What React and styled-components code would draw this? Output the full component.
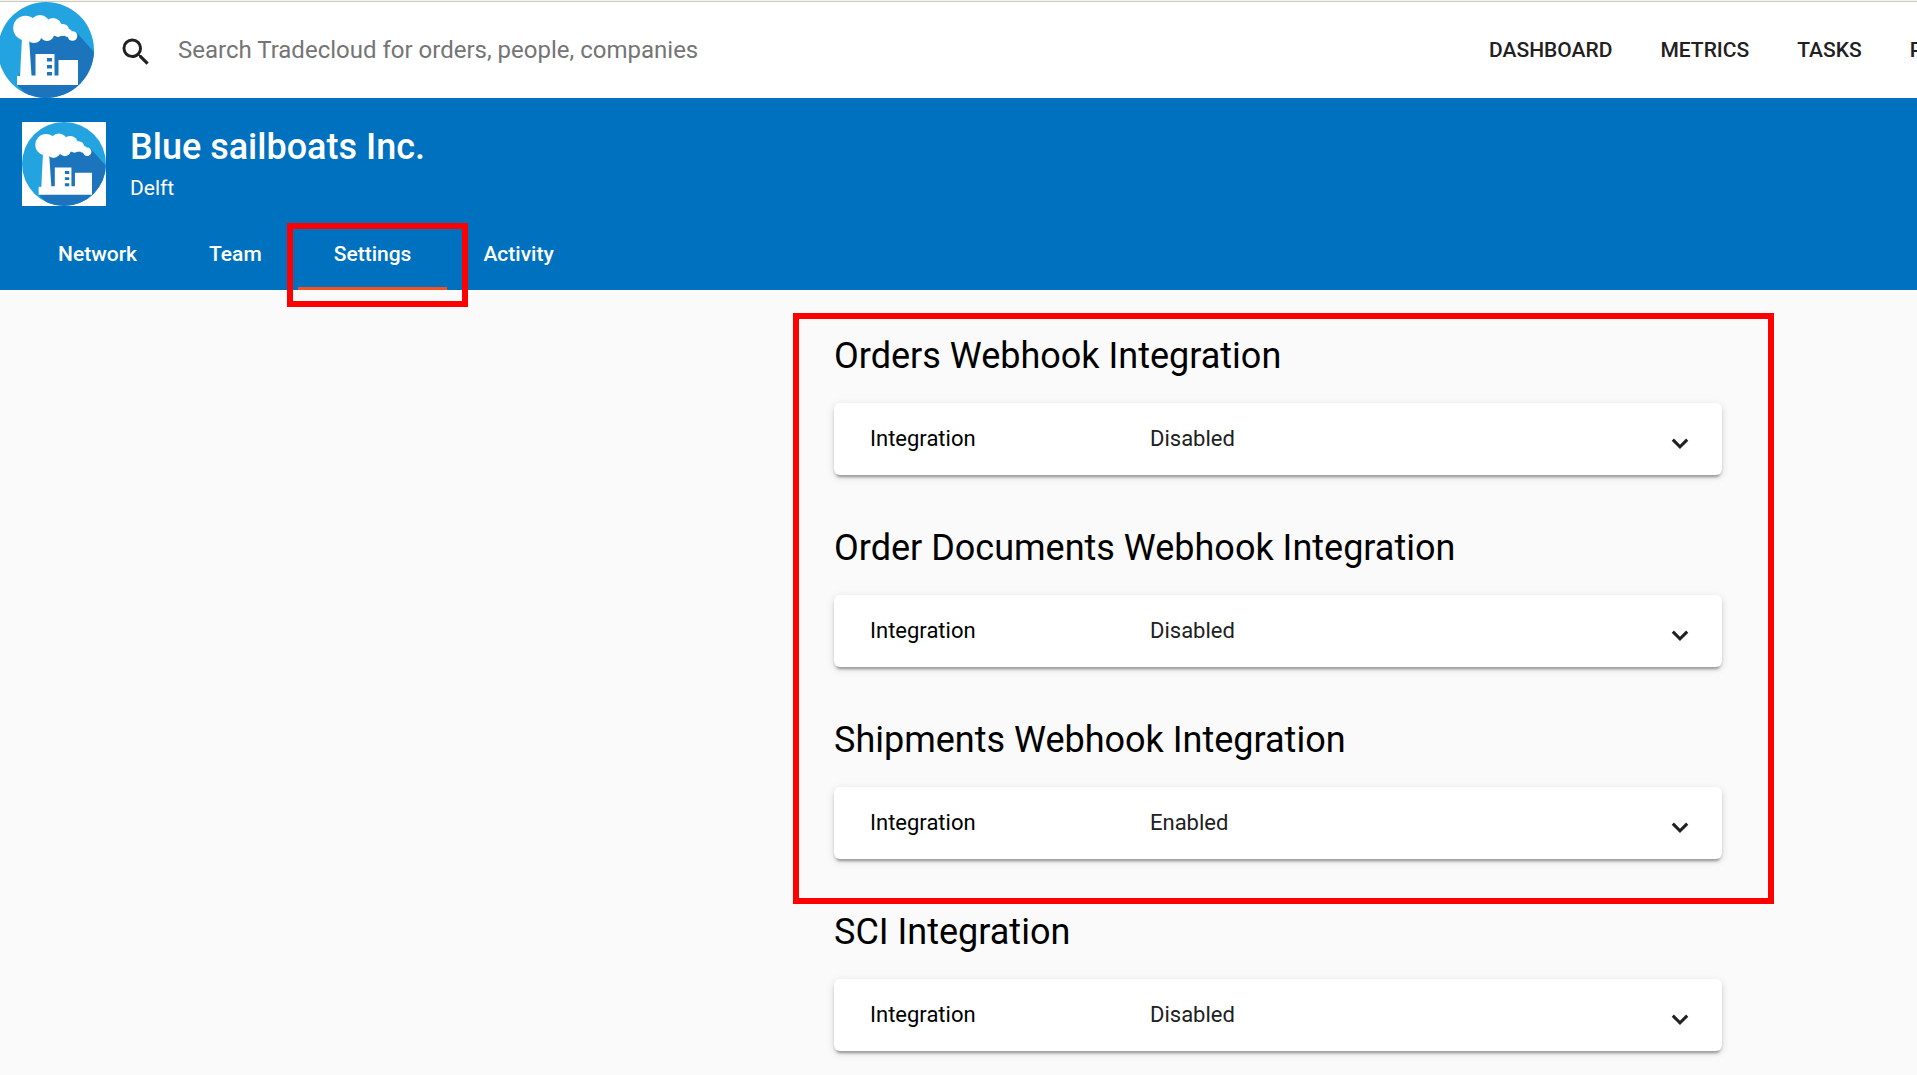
import React from "react";
import styled, { createGlobalStyle } from "styled-components";

const GlobalStyle = createGlobalStyle`
  *, *::before, *::after { box-sizing: border-box; }
  html, body { margin: 0; padding: 0; }
  body {
    background: #fafafa;
    color: rgba(0, 0, 0, 0.87);
    font-family: Roboto, "Liberation Sans", sans-serif;
    overflow-x: hidden;
  }
  button, input { font: inherit; }
`;

const TopBar = styled.header`
  display: flex;
  align-items: center;
  height: 98px;
  padding-top: 1px;
  border-top: 1px solid #f4f4ee;
  background: #fff;
  box-shadow: inset 0 1px #c9cbc0;
  overflow: hidden;
`;

const LogoLink = styled.a`
  display: block;
  flex: none;
  width: 96px;
  height: 96px;
  margin-left: -2px;
`;

const SearchForm = styled.form`
  display: flex;
  align-items: center;
  flex: 1;
  min-width: 0;
  gap: 24px;
  padding-left: 24px;
`;

const SearchButton = styled.button`
  display: flex;
  flex: none;
  padding: 4px 0 0;
  border: 0;
  background: none;
  color: #212121;
`;

const SearchInput = styled.input`
  flex: 1;
  min-width: 0;
  height: 48px;
  padding: 0;
  border: 0;
  outline: 0;
  background: none;
  color: #212121;
  font-size: 24px;
  line-height: 32px;

  &::placeholder { color: #757575; opacity: 1; }
`;

const MainNav = styled.nav`
  display: flex;
  flex: none;
  gap: 48px;
  width: 428px;
  overflow: hidden;
`;

const NavLink = styled.a`
  flex: none;
  color: #212121;
  font-size: 21px;
  font-weight: 500;
  line-height: 32px;
  text-decoration: none;
`;

const CompanyBanner = styled.section`
  display: flex;
  flex-direction: column;
  justify-content: space-between;
  height: 192px;
  padding: 24px 22px 0;
  background: #0071bf;
  color: #fff;
`;

const CompanyInfo = styled.div`
  display: flex;
  gap: 24px;
`;

const Avatar = styled.div`
  flex: none;
  width: 84px;
  height: 84px;
  background: #fff;
`;

const CompanyText = styled.div`
  display: flex;
  flex-direction: column;
`;

const CompanyName = styled.h1`
  margin: 0;
  font-size: 36px;
  font-weight: 500;
  line-height: 50px;
`;

const CompanyCity = styled.p`
  margin: 0;
  font-size: 21px;
  line-height: 32px;
`;

const Tabs = styled.nav`
  display: flex;
`;

const Tab = styled.a`
  position: relative;
  height: 72px;
  padding: 0 36px;
  border-bottom: 3px solid ${(p) => (p.$active ? "#f4511e" : "transparent")};
  color: #fff;
  font-size: 21px;
  font-weight: 500;
  line-height: 72px;
  text-decoration: none;
`;

const Highlight = styled.span`
  position: absolute;
  inset: ${(p) => p.$inset};
  border: 6px solid #f00;
  pointer-events: none;
`;

const Content = styled.main`
  display: grid;
  grid-template-columns: 834fr 888fr 195fr;
  padding: 42px 0 24px;
`;

const Integrations = styled.div`
  grid-column: 2;
  display: flex;
  flex-direction: column;
  gap: 48px;
  min-width: 0;
`;

const HighlightedGroup = styled.div`
  position: relative;
  display: flex;
  flex-direction: column;
  gap: 48px;
`;

const SectionTitle = styled.h2`
  margin: 0 0 23px;
  color: #000;
  font-size: 36px;
  font-weight: 400;
  line-height: 48px;
`;

const Section = styled.section`
  padding-bottom: 1px;
`;

const Panel = styled.button`
  display: grid;
  grid-template-columns: 280px 1fr 36px;
  align-items: center;
  width: 100%;
  height: 72px;
  padding: 0 24px 0 36px;
  border: 0;
  border-radius: 6px;
  background: #fff;
  box-shadow: 0 5px 2px -3px rgba(0, 0, 0, 0.2), 0 3px 3px 0 rgba(0, 0, 0, 0.14),
    0 2px 8px 0 rgba(0, 0, 0, 0.12);
  font-size: 22px;
  line-height: 32px;
  text-align: left;
`;

const PanelLabel = styled.span`
  color: #000;
`;

const PanelValue = styled.span`
  color: #212121;
`;

const Chevron = styled.svg`
  justify-self: center;
  margin-top: 8px;
`;

function FactoryLogo({ title }) {
  const clipId = `disc-${title.replace(/\W/g, "")}`;
  return (
    <svg viewBox="0 0 96 96" width="100%" height="100%" role="img" aria-label={title}>
      <defs>
        <clipPath id={clipId}>
          <circle cx="48" cy="48" r="48" />
        </clipPath>
      </defs>
      <g clipPath={`url(#${clipId})`}>
        <rect width="96" height="96" fill="#23a4e0" />
        <path d="M29 38 78 30 97 51V96H32L19 83Z" fill="#1c75bc" />
      </g>
      <g fill="#fff">
        <circle cx="27.5" cy="26" r="12.3" />
        <circle cx="42" cy="23" r="10" />
        <circle cx="36" cy="33" r="8" />
        <circle cx="55" cy="25" r="9" />
        <circle cx="49" cy="32" r="7" />
        <circle cx="65" cy="28" r="6" />
        <circle cx="60" cy="30" r="5" />
        <circle cx="70" cy="31" r="4" />
        <circle cx="74.5" cy="34" r="4.8" />
        <path d="M24 36H31L33.5 73.5H37.5V52H56.5V73.5H60.5V58H80V83H19V74H22Z" />
      </g>
      <path d="M49 56h5v3.4h-5zM49 63h5v3.4h-5zM49 70h5v3.4h-5z" fill="#1c75bc" />
    </svg>
  );
}

function IntegrationSection({ title, status }) {
  return (
    <Section>
      <SectionTitle>{title}</SectionTitle>
      <Panel type="button" aria-expanded="false">
        <PanelLabel>Integration</PanelLabel>
        <PanelValue>{status}</PanelValue>
        <Chevron width="18" height="11" viewBox="0 0 18 11" aria-hidden="true">
          <path d="M1.8 1.6 9 8.8l7.2-7.2" fill="none" stroke="#212121" strokeWidth="3" />
        </Chevron>
      </Panel>
    </Section>
  );
}

const navItems = ["DASHBOARD", "METRICS", "TASKS", "P"];
const tabs = ["Network", "Team", "Settings", "Activity"];
const webhooks = [
  { title: "Orders Webhook Integration", status: "Disabled" },
  { title: "Order Documents Webhook Integration", status: "Disabled" },
  { title: "Shipments Webhook Integration", status: "Enabled" },
];

export default function App() {
  return (
    <>
      <GlobalStyle />
      <TopBar>
        <LogoLink href="#home">
          <FactoryLogo title="Home" />
        </LogoLink>
        <SearchForm role="search" onSubmit={(e) => e.preventDefault()}>
          <SearchButton type="submit" aria-label="Search">
            <svg width="36" height="36" viewBox="0 0 24 24" fill="currentColor" aria-hidden="true">
              <path d="M15.5 14h-.79l-.28-.27A6.471 6.471 0 0 0 16 9.5 6.5 6.5 0 1 0 9.5 16c1.61 0 3.09-.59 4.23-1.57l.27.28v.79l5 4.99L20.49 19l-4.99-5zm-6 0C7.01 14 5 11.99 5 9.5S7.01 5 9.5 5 14 7.01 14 9.5 11.99 14 9.5 14z" />
            </svg>
          </SearchButton>
          <SearchInput
            type="text"
            aria-label="Search Tradecloud"
            placeholder="Search Tradecloud for orders, people, companies"
          />
        </SearchForm>
        <MainNav aria-label="Main">
          {navItems.map((item) => (
            <NavLink key={item} href={`#${item.toLowerCase()}`}>{item}</NavLink>
          ))}
        </MainNav>
      </TopBar>
      <CompanyBanner>
        <CompanyInfo>
          <Avatar>
            <FactoryLogo title="Blue sailboats Inc." />
          </Avatar>
          <CompanyText>
            <CompanyName>Blue sailboats Inc.</CompanyName>
            <CompanyCity>Delft</CompanyCity>
          </CompanyText>
        </CompanyInfo>
        <Tabs aria-label="Company">
          {tabs.map((tab) => (
            <Tab
              key={tab}
              href={`#${tab.toLowerCase()}`}
              $active={tab === "Settings"}
              aria-current={tab === "Settings" ? "page" : undefined}
            >
              {tab}
              {tab === "Settings" && <Highlight $inset="5px -21px -20px -11px" />}
            </Tab>
          ))}
        </Tabs>
      </CompanyBanner>
      <Content>
        <Integrations>
          <HighlightedGroup>
            {webhooks.map((item) => (
              <IntegrationSection key={item.title} {...item} />
            ))}
            <Highlight $inset="-19px -52px -44px -41px" />
          </HighlightedGroup>
          <IntegrationSection title="SCI Integration" status="Disabled" />
        </Integrations>
      </Content>
    </>
  );
}
